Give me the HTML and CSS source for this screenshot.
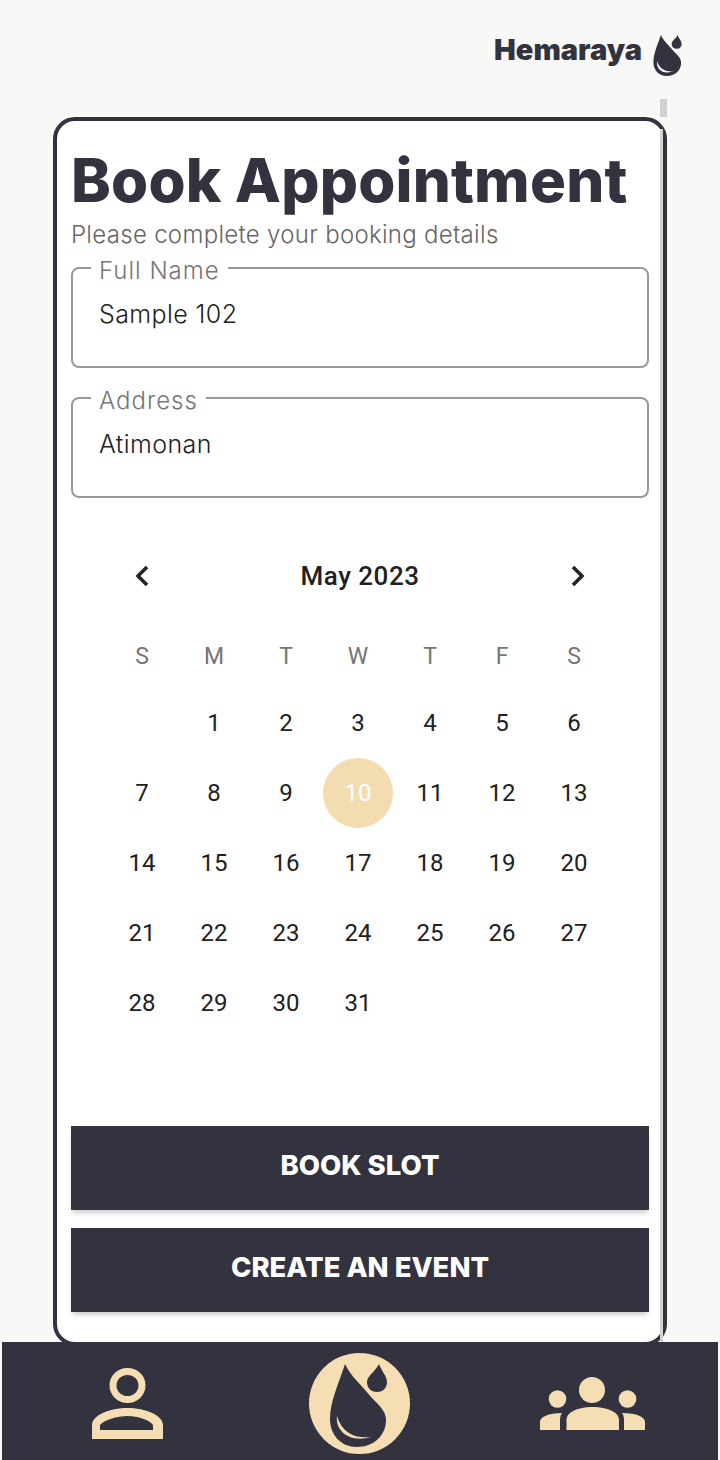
FILE: index.html
```html
<!DOCTYPE html>
<html lang="en">
  <head>
    <meta charset="utf-8" />
    <title>Hemaraya</title>
    <link rel="stylesheet" href="styles.css">
  </head>
  <body>
    <header class="topbar">
      <span class="brand">Hemaraya</span>
      <svg class="brand-icon" viewBox="21 11 57 83">
        <path class="drop" d="M36 11C42 24 52 31 62 44C70 52 77 58 77 67C77 83 64 94 48 94C32 94 21 82 21 66C21 48 30 30 36 11Z" />
        <path class="drop" d="M70 11C73 19 78 23 78 29C78 35 74 39 68 39C62 39 58 35 58 29C58 23 66 19 70 11Z" />
        <path class="shine-light" d="M28.5 64C26 80 40 92 62 84.5C46 86 33 80 28.5 64Z" />
      </svg>
    </header>

    <main class="content">
      <section class="card">
        <h1 class="title">Book Appointment</h1>
        <p class="subtitle">Please complete your booking details</p>

        <fieldset class="field">
          <legend>Full Name</legend>
          <div class="value">Sample 102</div>
        </fieldset>
        <fieldset class="field">
          <legend>Address</legend>
          <div class="value">Atimonan</div>
        </fieldset>

        <div class="calendar">
          <div class="cal-head">
            <svg class="chevron" viewBox="0 0 14 22"><path d="M12 2L3 11L12 20" /></svg>
            <span class="cal-month">May 2023</span>
            <svg class="chevron" viewBox="0 0 14 22"><path d="M2 2L11 11L2 20" /></svg>
          </div>
          <div class="cal-week">
            <span>S</span><span>M</span><span>T</span><span>W</span><span>T</span><span>F</span><span>S</span>
          </div>
          <div class="cal-days">
            <span></span><span>1</span><span>2</span><span>3</span><span>4</span><span>5</span><span>6</span>
            <span>7</span><span>8</span><span>9</span><span class="selected">10</span><span>11</span><span>12</span><span>13</span>
            <span>14</span><span>15</span><span>16</span><span>17</span><span>18</span><span>19</span><span>20</span>
            <span>21</span><span>22</span><span>23</span><span>24</span><span>25</span><span>26</span><span>27</span>
            <span>28</span><span>29</span><span>30</span><span>31</span>
          </div>
        </div>

        <button class="action action-first">BOOK SLOT</button>
        <button class="action">CREATE AN EVENT</button>
      </section>
    </main>

    <nav class="tabbar">
      <svg class="tab-user" viewBox="0 0 72 71">
        <ellipse class="ring" cx="35.5" cy="17.5" rx="14.5" ry="14" />
        <path class="cream" fill-rule="evenodd" d="M0 71V57C0 47 18 40 35.500 40C53 40 71 47 71 57V71ZM8 62H61V57C58 52 46 48 35.500 48C25 48 12 52 8 57Z" />
      </svg>
      <svg class="tab-drop" viewBox="0 0 101 101">
        <circle class="cream" cx="50.500" cy="50.500" r="50.500" />
        <path class="drop" d="M36 11C42 24 52 31 62 44C70 52 77 58 77 67C77 83 64 94 48 94C32 94 21 82 21 66C21 48 30 30 36 11Z" />
        <path class="drop" d="M70 11C73 19 78 23 78 29C78 35 74 39 68 39C62 39 58 35 58 29C58 23 66 19 70 11Z" />
        <path class="cream" d="M28 63C26 79 42 90 62 84C46 86 33 80 28 63Z" />
      </svg>
      <svg class="tab-group" viewBox="0 0 105 53">
        <ellipse class="cream" cx="52" cy="13" rx="13" ry="13" />
        <circle class="cream" cx="17.500" cy="22" r="8.800" />
        <circle class="cream" cx="87.500" cy="22" r="8.800" />
        <path class="cream" d="M26.500 53V43C26.500 35 38 30 52.500 30C67 30 79 35 79 43V53Z" />
        <path class="cream" d="M0 53V45C0 40 8 36 22 36C20 39 20 41 20 45V53Z" />
        <path class="cream" d="M105 53V45C105 40 97 36 82 36C84 39 84 41 84 45V53Z" />
      </svg>
    </nav>
  </body>
</html>
```

FILE: styles.css
```css
html, body {
  margin: 0;
  height: 1460px;
}
body {
  display: flex;
  flex-direction: column;
  background: #f8f8f7;
  font-family: "Inter", "Liberation Sans", sans-serif;
  overflow: hidden;
}

.topbar {
  height: 99px;
  flex: none;
  display: flex;
  justify-content: flex-end;
  align-items: flex-start;
  gap: 11px;
  padding: 35px 38px 0 0;
  box-sizing: border-box;
}
.brand {
  font-size: 29px;
  font-weight: 900;
  line-height: 30px;
  color: #333340;
}
.brand-icon {
  width: 29px;
  height: 41px;
}
.drop {
  fill: #333340;
}
.shine-light {
  fill: #f8f8f7;
}
.cream {
  fill: #f5deb3;
}

.content {
  flex: 1;
  min-height: 0;
  overflow: hidden;
  padding: 18px 53px 0;
}
.card {
  position: relative;
  box-sizing: border-box;
  width: 614px;
  height: 1229px;
  padding: 23px 14px 0;
  background: #fff;
  border: 4px solid #333340;
  border-radius: 22px;
}
/* scrollbar track shows above the card and along its inner edge */
.card::before {
  content: "";
  position: absolute;
  top: -22px;
  right: -4px;
  width: 7px;
  height: 18px;
  background: #d2d2d2;
}
.card::after {
  content: "";
  position: absolute;
  top: 8px;
  bottom: 0;
  right: 0;
  width: 3px;
  background: #d2d2d2;
}

.title {
  margin: 0;
  font-size: 60px;
  line-height: 72px;
  font-weight: 800;
  letter-spacing: 0.2px;
  color: #333340;
  white-space: nowrap;
}
.subtitle {
  margin: 2px 0 0;
  font-size: 24px;
  line-height: 34px;
  font-weight: 300;
  letter-spacing: 0.3px;
  color: #666;
}

.field {
  box-sizing: border-box;
  height: 116px;
  min-width: 0;
  margin: 0 0 14px;
  padding: 0 26px;
  border: 2px solid #999;
  border-radius: 8px;
}
.field legend {
  margin-left: -8px;
  padding: 7px 8px 0;
  font-size: 24px;
  line-height: 24px;
  font-weight: 300;
  letter-spacing: 1px;
  color: #757575;
}
.value {
  margin-top: 13px;
  font-size: 25px;
  line-height: 36px;
  font-weight: 300;
  letter-spacing: 0.4px;
  color: #222;
}

.calendar {
  margin: 0 0 0 35px;
  padding-top: 44px;
  width: 504px;
  font-family: "Roboto", "Liberation Sans", sans-serif;
  color: #212121;
}
.cal-head {
  display: flex;
  justify-content: space-between;
  align-items: center;
  height: 40px;
  padding: 0 25px 0 29px;
}
.cal-month {
  font-size: 26px;
  font-weight: 500;
  letter-spacing: 0.5px;
}
.chevron {
  width: 14px;
  height: 22px;
}
.chevron path {
  fill: none;
  stroke: #212121;
  stroke-width: 3.5;
}
.cal-week, .cal-days {
  display: grid;
  grid-template-columns: repeat(7, 72px);
  text-align: center;
}
.cal-week {
  margin-top: 40px;
  height: 52px;
  font-size: 23px;
  line-height: 42px;
  color: #757575;
}
.cal-days {
  grid-auto-rows: 70px;
  font-size: 24px;
  line-height: 70px;
}
.selected {
  width: 70px;
  height: 70px;
  justify-self: center;
  border-radius: 50%;
  background: #f3dcb0;
  color: #fff;
}

.action {
  display: block;
  width: 100%;
  height: 84px;
  margin: 0 0 18px;
  padding: 0 0 6px;
  border: 0;
  background: #333340;
  box-shadow: 0 5px 5px -2px rgba(0, 0, 0, 0.2);
  color: #fff;
  font-family: inherit;
  font-size: 27.500px;
  font-weight: 800;
}
.action-first {
  margin-top: 88px;
}

.tabbar {
  flex: none;
  box-sizing: border-box;
  height: 118px;
  margin: 0 2px;
  display: flex;
  justify-content: space-between;
  align-items: flex-start;
  padding: 11px 73px 0 90px;
  background: #333340;
}
.tab-user {
  width: 72px;
  height: 71px;
  margin-top: 15px;
}
.ring {
  fill: none;
  stroke: #f5deb3;
  stroke-width: 7;
}
.tab-drop {
  width: 101px;
  height: 101px;
  margin-left: 14px;
}
.tab-group {
  width: 105px;
  height: 53px;
  margin-top: 24px;
}
```
